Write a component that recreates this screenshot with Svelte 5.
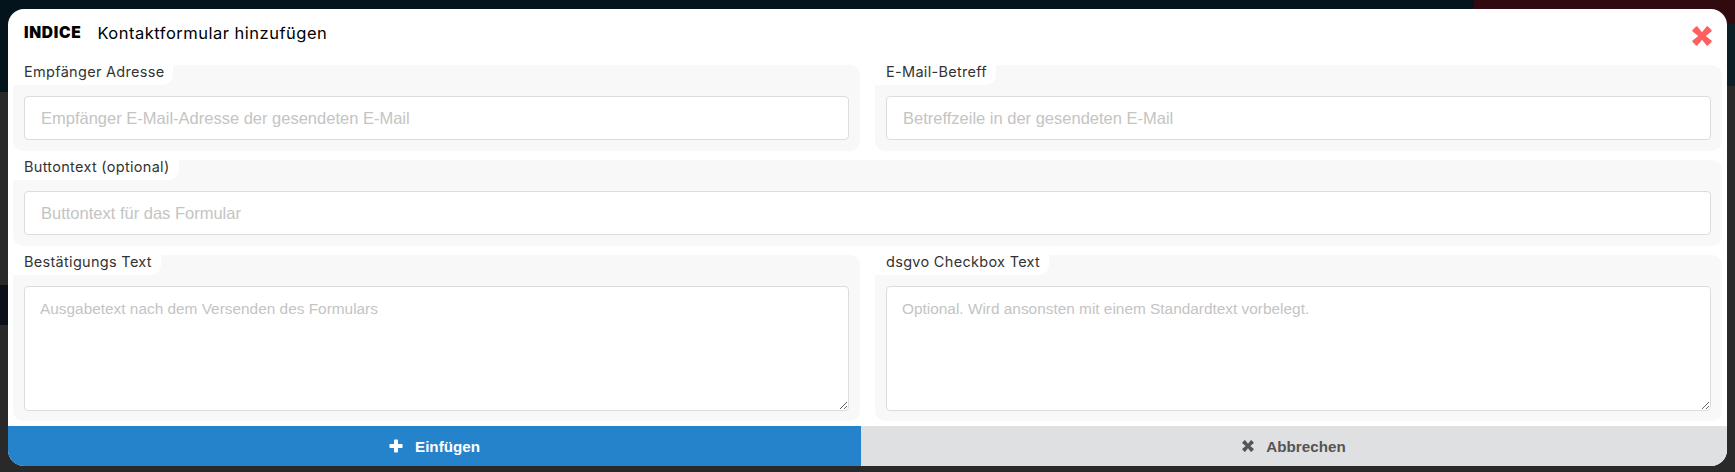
<script lang="ts">
  // Kontaktformular dialog
  const topFields = [
    { label: "Empfänger Adresse", placeholder: "Empfänger E-Mail-Adresse der gesendeten E-Mail" },
    { label: "E-Mail-Betreff", placeholder: "Betreffzeile in der gesendeten E-Mail" },
  ];
  const textFields = [
    { label: "Bestätigungs Text", placeholder: "Ausgabetext nach dem Versenden des Formulars" },
    { label: "dsgvo Checkbox Text", placeholder: "Optional. Wird ansonsten mit einem Standardtext vorbelegt." },
  ];
</script>

<div class="page">
  <div class="modal">
    <header class="head">
      <div class="title"><strong>INDICE</strong><span>Kontaktformular hinzufügen</span></div>
      <button class="close" aria-label="Schließen">
        <svg viewBox="0 0 20 20" width="20" height="20"><path d="M10 6.200 14.600.6a1 1 0 0 1 1.400 0l3.400 3.400a1 1 0 0 1 0 1.400L13.800 10l5.600 4.600a1 1 0 0 1 0 1.400L16 19.400a1 1 0 0 1-1.400 0L10 13.800l-4.600 5.600a1 1 0 0 1-1.400 0L.6 16a1 1 0 0 1 0-1.400L6.200 10 .6 5.400a1 1 0 0 1 0-1.400L4 .6a1 1 0 0 1 1.400 0z" fill="#ff5f5f"/></svg>
      </button>
    </header>

    <div class="form">
      <div class="row two">
        {#each topFields as f}
          <div class="panel">
            <label class="tab">{f.label}</label>
            <input type="text" placeholder={f.placeholder} />
          </div>
        {/each}
      </div>
      <div class="row">
        <div class="panel">
          <label class="tab">Buttontext (optional)</label>
          <input type="text" placeholder="Buttontext für das Formular" />
        </div>
      </div>
      <div class="row two">
        {#each textFields as f}
          <div class="panel tall">
            <label class="tab">{f.label}</label>
            <textarea placeholder={f.placeholder}></textarea>
          </div>
        {/each}
      </div>
    </div>

    <footer class="actions">
      <button class="btn primary">
        <svg viewBox="0 0 14 14" width="14" height="14"><path d="M5 1.200C5 .7 5.400.4 5.800.4h2.400c.4 0 .8.3.8.8V5h3.800c.5 0 .8.4.8.8v2.400c0 .4-.3.8-.8.8H9v3.800c0 .5-.4.8-.8.8H5.800c-.4 0-.8-.3-.8-.8V9H1.200C.7 9 .4 8.600.4 8.200V5.800c0-.4.3-.8.8-.8H5z" fill="currentColor"/></svg>
        Einfügen
      </button>
      <button class="btn secondary">
        <svg viewBox="0 0 20 20" width="12" height="12"><path d="M10 6.200 14.600.6a1 1 0 0 1 1.400 0l3.400 3.400a1 1 0 0 1 0 1.400L13.800 10l5.600 4.600a1 1 0 0 1 0 1.400L16 19.400a1 1 0 0 1-1.400 0L10 13.800l-4.600 5.600a1 1 0 0 1-1.400 0L.6 16a1 1 0 0 1 0-1.400L6.200 10 .6 5.400a1 1 0 0 1 0-1.400L4 .6a1 1 0 0 1 1.400 0z" fill="currentColor"/></svg>
        Abbrechen
      </button>
    </footer>
  </div>
</div>

<style>
  :global(body) {
    margin: 0;
  }

  .page {
    box-sizing: border-box;
    width: 1735px;
    height: 472px;
    padding: 9px 8px 6px 8px;
    background:
      linear-gradient(#300a0e, #300a0e) right top / 261px 24px no-repeat,
      linear-gradient(#0c1e26, #0c1e26) right 24px / 261px 62px no-repeat,
      linear-gradient(#04141c, #04141c) left top / 1474px 92px no-repeat,
      linear-gradient(#0a0f1a, #0a0f1a) left 285px / 8px 40px no-repeat,
      #292929;
    overflow: hidden;
  }

  .modal {
    display: flex;
    flex-direction: column;
    height: 100%;
    background: #fff;
    border-radius: 16px;
    overflow: hidden;
    font-family: Inter, "Liberation Sans", sans-serif;
  }

  .head {
    display: flex;
    align-items: center;
    justify-content: space-between;
    height: 47px;
    padding: 0 15px 0 16px;
    flex: none;
    margin-bottom: 9px;
  }

  .title {
    display: flex;
    gap: 16px;
    align-items: center;
    font-size: 16.5px;
    letter-spacing: 0.5px;
    color: #000;
  }

  .title strong {
    font-weight: 900;
    font-size: 15.5px;
    letter-spacing: 0.7px;
  }

  .close {
    border: 0;
    background: none;
    padding: 0;
    display: flex;
    margin-top: 6px;
  }

  .form {
    display: flex;
    flex-direction: column;
    gap: 9px;
    padding: 0 5px;
    flex: 1;
  }

  .row {
    display: flex;
    gap: 15px;
  }

  .panel {
    flex: 1;
    display: flex;
    flex-direction: column;
    background: #f8f8f8;
    border-radius: 10px;
    padding: 0 11px 11px;
  }

  .panel.tall {
    padding-bottom: 10px;
  }

  .tab {
    align-self: flex-start;
    box-sizing: border-box;
    height: 20px;
    margin: 0 0 11px -11px;
    padding: 0 9px 0 11px;
    background: #fff;
    border-radius: 0 0 10px 0;
    font-size: 14.5px;
    letter-spacing: 0.3px;
    line-height: 13px;
    color: #333;
  }

  input,
  textarea {
    display: block;
    box-sizing: border-box;
    width: 100%;
    border: 1px solid #dcdcdc;
    border-radius: 4px;
    background: #fff;
    font-family: "Liberation Sans", Arial, sans-serif;
    color: #333;
    outline: none;
  }

  input {
    height: 44px;
    padding: 0 16px;
    font-size: 16.5px;
  }

  textarea {
    height: 125px;
    padding: 13px 15px;
    font-size: 15.4px;
  }

  input::placeholder,
  textarea::placeholder {
    color: #c4c4c4;
    opacity: 1;
  }

  .actions {
    display: grid;
    grid-template-columns: 853px 1fr;
    flex: none;
    height: 40px;
  }

  .btn {
    display: flex;
    align-items: center;
    justify-content: center;
    gap: 12px;
    border: 0;
    font-family: "Liberation Sans", Arial, sans-serif;
    font-weight: 700;
    font-size: 15.2px;
  }

  .primary {
    background: #2583cc;
    color: #fff;
  }

  .secondary {
    background: #dfe0e2;
    color: #555;
  }
</style>
